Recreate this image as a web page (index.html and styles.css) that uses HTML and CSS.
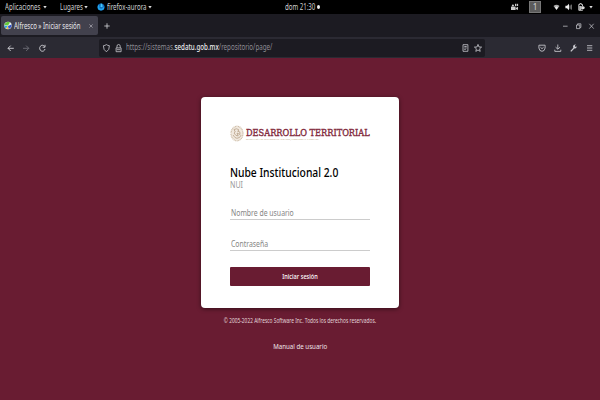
FILE: index.html
```html
<!DOCTYPE html>
<html lang="es">
<head>
<meta charset="utf-8">
<title>Alfresco » Iniciar sesión</title>
<link rel="stylesheet" href="styles.css">
</head>
<body>
<header class="topbar">
  <div class="menus">
    <span class="menu menu-apps"><span class="cond">Aplicaciones</span></span><i class="caret"></i>
    <span class="menu menu-places"><span class="cond">Lugares</span></span><i class="caret"></i>
    <svg class="fox" viewBox="0 0 8 8"><circle cx="4" cy="4" r="3.5" fill="#1268b8"/><path d="M.8 3Q0 7 4 7.6 8 7 7.2 3 6 6 4 5.8 2 5.5 2.4 3L1.8 1.5Z" fill="#20a5ed"/><path d="M3.8.2Q6 1 5.5 4.2L3.5 4Z" fill="#40c8f8"/></svg>
    <span class="menu menu-fox"><span class="cond">firefox-aurora</span></span><i class="caret"></i>
  </div>
  <div class="clock"><span class="cond">dom 21:30</span></div><i class="dot"></i>
  <div class="tray">
    <svg class="cam" viewBox="0 0 8 8" fill="#c9c9c9"><rect x="0" y="3.6" width="4.6" height="3.4"/><path d="M4.8 5 7 3.7V7L4.8 6Z"/><circle cx="1.9" cy="2.5" r="1.1"/><rect x="4" y=".8" width="1.3" height="2.2"/><rect x="5.8" y=".8" width="1.3" height="2.2"/></svg>
    <span class="space">1</span>
    <svg class="wifi" viewBox="0 0 7 8"><path d="M.5 3Q3.5.5 6.5 3L3.5 7Z" fill="#aaa"/><path d="M2 4.2Q3.5 3 5 4.2L3.5 6.8Z" fill="#eee"/></svg>
    <svg class="vol" viewBox="0 0 8 8"><path d="M.4 2.8H2L4 .8V7.2L2 5.3H.4Z" fill="#eee"/><path d="M5 2.4V5.8M6.3 1.6V6.6" stroke="#999" stroke-width=".9"/></svg>
    <svg class="batt" viewBox="0 0 7 8"><path d="M.8 1.5H1.8V.6H3.4V1.5H4.5V3M4.5 6.8V7.3H.8V1.5" fill="none" stroke="#ddd" stroke-width=".9"/><path d="M1.2 3H3V7H1.2Z" fill="#bbb"/><path d="M3.2 3.2H5.2Q6.7 3.4 6.7 4.8T5.2 6.3H3.2Z" fill="#ddd"/></svg>
    <i class="caret"></i>
  </div>
</header>
<nav class="tabs">
  <div class="tab">
    <svg class="fav" viewBox="0 0 8 8"><circle cx="4" cy="4" r="3.7" fill="#e8f2ee"/><path d="M.4 3.6A3.6 3.6 0 0 1 6 1L4 4Z" fill="#65c83a"/><path d="M.4 4 3.8 4.4 2 7Q.3 5.8.4 4Z" fill="#2ca8dc"/><path d="M4 4.6 7.6 3Q7.8 6.4 4.6 7.6Z" fill="#3151c8"/><path d="M3.8 4.5 4.4 7.6 2 7Z" fill="#f0c33c"/></svg>
    <span class="tab-title"><span class="cond">Alfresco » Iniciar sesión</span></span>
    <svg class="x" viewBox="0 0 4 4"><path d="M.4.4 3.6 3.6M3.6.4.4 3.6" stroke="#c4c3cb" stroke-width=".6"/></svg>
  </div>
  <svg class="plus" viewBox="0 0 6 6"><path d="M3 .3V5.7M.3 3H5.7" stroke="#d8d8dd" stroke-width=".8"/></svg>
  <svg class="win" viewBox="0 0 36 8" fill="none" stroke="#d0d0d5" stroke-width=".7"><path d="M3 4.2H7.6M16.5 3H19.8V6.6H16.5ZM17.6 3V1.8H20.9V5.4H19.8M29.3 1.8 33.7 6.6M33.7 1.8 29.3 6.6"/></svg>
</nav>
<div class="toolbar">
  <svg class="nav-icons" viewBox="0 0 50 10" fill="none" stroke-width=".85"><path d="M13.8 5.3H8M10.7 2.6 8 5.3 10.7 8" stroke="#dedee3"/><path d="M23 5.3H28.8M26.1 2.6 28.8 5.3 26.1 8" stroke="#73727b"/><path d="M44.5 3.4A2.7 3 0 1 0 45 6M45 1.8V4.2H42.7" stroke="#dedee3"/></svg>
  <div class="url">
    <svg class="lock" viewBox="0 0 21 10" fill="none" stroke="#c9c9cf" stroke-width=".8"><path d="M4.4 1.6Q5.8 2.6 7.4 2.7 7.6 7 4.4 8.8 1.2 7 1.4 2.7 3 2.6 4.4 1.6ZM14.1 4.9H19.1V8.7H14.1ZM15 4.8V3.2Q15 1.5 16.6 1.5T18.2 3.2V4.8M14.8 6.7H18.4"/></svg>
    <span class="address"><span class="cond">https://sistemas.<b>sedatu.gob.mx</b>/repositorio/page/</span></span>
    <svg class="marks" viewBox="0 0 22 10" fill="none" stroke="#c9c9cf" stroke-width=".8"><path d="M2 1.7H6.9V8.3H2ZM3.3 3.5H5.7M3.3 5H5.7M3.3 6.5H4.7M17 1.4 18 4 20.6 4.1 18.6 5.8 19.2 8.4 17 7 14.8 8.4 15.4 5.8 13.4 4.1 16 4Z"/></svg>
  </div>
  <svg class="actions" viewBox="0 0 60 10" fill="none" stroke="#c9c9cf" stroke-width=".85"><path d="M1.9 2.2H8.1V5Q7.6 8.3 5 8.3 2.4 8.3 1.9 5ZM3.4 4.2 5 5.7 6.6 4.2M20.8 1.5V6M18.6 4.2 20.8 6.2 23 4.2M17.8 6.7V8.4H23.8V6.7"/><path d="M33.8 8.4 37.3 4.6" stroke-width="1.3"/><path d="M39.8 3.5 38.1 3.8 37.9 2.6 39 1.5Q36.4 1.2 36 3.3 36 5.7 38.3 5.5 39.7 5.1 39.8 3.5Z" fill="#c9c9cf" stroke="none"/><path d="M50 2.7H55.3M50 5H55.3M50 7.3H55.3"/></svg>
</div>
<main class="page">
  <section class="card">
    <div class="brand">
      <svg class="seal" viewBox="0 0 14 17"><ellipse cx="7" cy="8.5" rx="6" ry="7.3" fill="#f1e9df" stroke="#cdbca6" stroke-width="1.2" stroke-dasharray="1 .6"/><path d="M4 4.5Q7 2.8 9 5L7.6 6.2Q10.8 6 10 9.5L7 8 8.2 11Q5.6 11.2 4 8L5.3 7ZM3 10Q5 13.5 7 13.3 10 13.2 11.2 10" fill="none" stroke="#b7a188" stroke-width=".8"/></svg>
      <div class="wordmark">
        <div class="name">DESARROLLO TERRITORIAL</div>
        <div class="sub">SECRETARÍA DE DESARROLLO AGRARIO, TERRITORIAL Y URBANO</div>
      </div>
    </div>
    <h1><span class="cond">Nube Institucional 2.0</span></h1>
    <p class="tag"><span class="cond">NUI</span></p>
    <div class="field user"><span class="cond">Nombre de usuario</span></div>
    <div class="field pass"><span class="cond">Contraseña</span></div>
    <div class="submit"><span class="cond mid">Iniciar sesión</span></div>
  </section>
  <p class="copy"><span class="cond mid">© 2005-2022 Alfresco Software Inc. Todos los derechos reservados.</span></p>
  <p class="manual"><span class="cond mid">Manual de usuario</span></p>
</main>
</body>
</html>
```
FILE: styles.css
```css
* { box-sizing: border-box; }
body { margin: 0; width: 600px; height: 400px; overflow: hidden; background: #691c32; font: 8.2px/10px "Noto Sans", sans-serif; color: #fff; }
svg { display: block; flex: none; }
h1, p { margin: 0; }
.cond { display: inline-block; white-space: nowrap; transform: scaleX(.79); transform-origin: left center; }
.mid { transform-origin: center; }

.topbar { height: 14px; background: #000; display: flex; align-items: center; color: #d2d2d2; }
.menus { width: 285px; display: flex; align-items: center; padding-left: 5px; flex: none; }
.menu { flex: none; }
.menu-apps { width: 38px; }
.menu-places { width: 24px; margin-left: 13px; }
.menu-fox { width: 41px; margin-left: 2px; }
.fox { width: 8px; height: 8px; margin-left: 9px; }
.caret { flex: none; width: 4px; height: 3px; background: #ddd; clip-path: polygon(0 0, 100% 0, 50% 100%); }
.clock { width: 32px; flex: none; }
.dot { width: 3px; height: 4px; border-radius: 50%; background: #eee; }
.tray { margin-left: auto; padding-right: 7px; display: flex; align-items: center; }
.topbar .cond { transform: scaleX(.745); }
.cam { width: 8px; height: 8px; margin-right: 10px; }
.space { width: 12px; height: 12px; background: #5b5b5b; border: 1px solid #777; text-align: center; }
.wifi { width: 7px; height: 8px; margin-left: 12px; }
.vol { width: 8px; height: 8px; margin-left: 5px; }
.batt { width: 7px; height: 8px; margin: 0 4px 0 5px; }

.tabs { height: 23px; background: #1c1b22; display: flex; align-items: center; padding-left: 1px; }
.tab { width: 97px; height: 19px; background: #42414d; border-radius: 2px; display: flex; align-items: center; padding-left: 3px; color: #e6e6ea; }
.fav { width: 8px; height: 9px; }
.tab-title { width: 72px; margin-left: 2px; flex: none; line-height: 9px; margin-bottom: 1px; }
.tab-title .cond { transform: scaleX(.74); }
.x { width: 4px; height: 4px; margin-left: 3px; }
.plus { width: 6px; height: 6px; margin-left: 6px; }
.win { width: 36px; height: 8px; margin-left: auto; margin-right: 4px; }

.toolbar { height: 21px; background: #2b2a33; display: flex; align-items: center; }
.nav-icons { width: 50px; height: 10px; }
.url { width: 386px; height: 18px; margin-left: 49px; background: #1c1b22; border-radius: 2px; display: flex; align-items: center; padding-left: 3px; }
.lock { width: 21px; height: 10px; }
.address { margin-left: 3px; margin-bottom: 1px; width: 150px; color: #8d8c94; }
.address .cond { transform: scaleX(.757); }
.address b { font-weight: 500; color: #ececf0; }
.marks { width: 22px; height: 10px; margin-left: auto; margin-right: 2px; }
.actions { width: 60px; height: 10px; margin-left: 52px; }

.page { height: 342px; padding-top: 39px; display: flex; flex-direction: column; align-items: center; }
.card { width: 198px; height: 211px; padding: 27px 29px 0; background: #fff; border-radius: 4px; box-shadow: 0 1px 4px rgba(0, 0, 0, .5); color: #000; }
.brand { display: flex; height: 20px; }
.seal { width: 14px; height: 19px; }
.wordmark { width: 124px; margin-left: 2px; padding-top: 3px; }
.name { height: 11px; font: 10px/11px "DejaVu Serif", serif; color: #832c40; white-space: nowrap; transform: scaleX(.822); transform-origin: left; -webkit-text-stroke: .4px #832c40; }
.sub { height: 4px; font: 2.3px/3px "Liberation Serif", serif; color: #a07c4c; white-space: nowrap; }
h1 { margin-top: 21px; font-size: 12.5px; line-height: 15px; height: 15px; font-weight: 500; }
h1 .cond { transform: scaleX(.825); }
.tag { font-size: 9px; line-height: 10px; height: 10px; color: #999; }
.tag .cond { transform: scaleX(.79); }
.field { height: 16px; border-bottom: 1px solid #ccc; font-size: 9.3px; line-height: 17px; color: #858585; padding-left: 1px; }
.field .cond { transform: scaleX(.74); }
.user { margin-top: 14px; }
.pass { margin-top: 15px; }
.submit { margin-top: 16px; height: 19px; background: #691c32; border-radius: 1px; color: #fff; font-size: 7.3px; line-height: 19px; display: flex; justify-content: center; font-weight: 500; }
.submit .cond { transform: scaleX(.77); }
.copy { margin-top: 8px; font-size: 6.2px; line-height: 10px; height: 10px; color: #e2d5d9; }
.copy .cond { transform: scaleX(.785); }
.manual { margin-top: 15px; font-size: 7.8px; line-height: 10px; color: #eee5e8; }
```
